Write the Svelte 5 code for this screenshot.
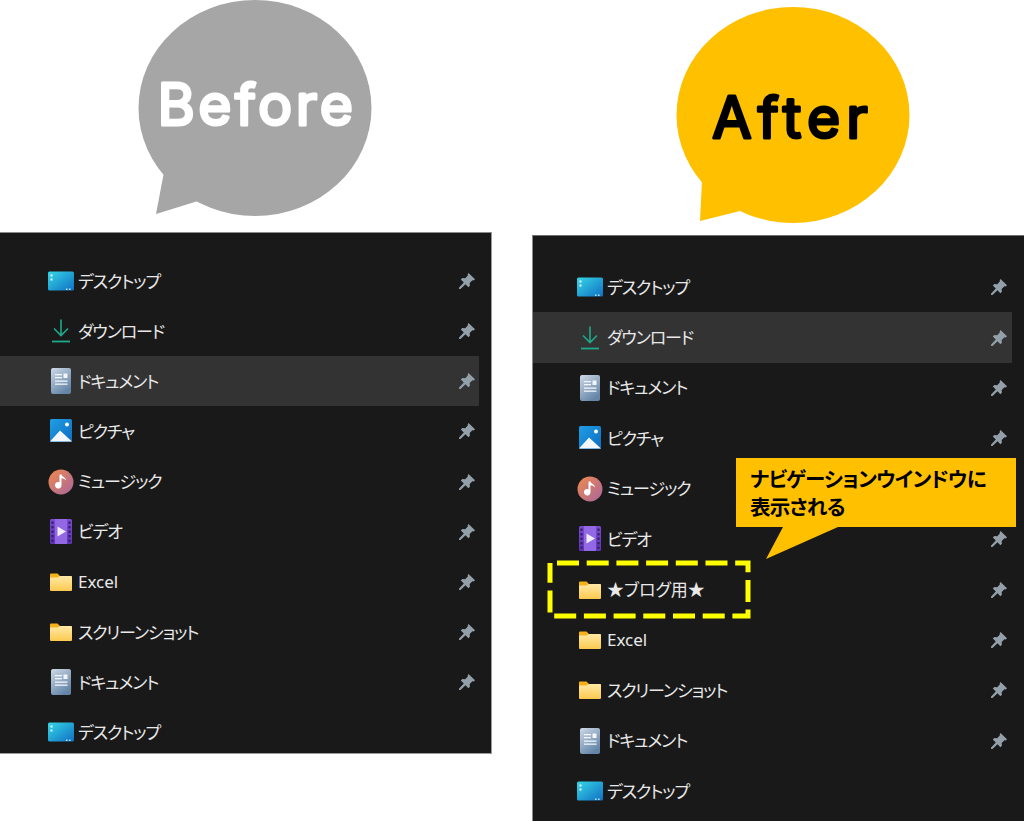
<script lang="ts">
	const before = [
		{ icon: 'desktop', label: 'デスクトップ', pin: true },
		{ icon: 'download', label: 'ダウンロード', pin: true },
		{ icon: 'doc', label: 'ドキュメント', pin: true, hover: true },
		{ icon: 'picture', label: 'ピクチャ', pin: true },
		{ icon: 'music', label: 'ミュージック', pin: true },
		{ icon: 'video', label: 'ビデオ', pin: true },
		{ icon: 'folder', label: 'Excel', pin: true, plain: true },
		{ icon: 'folder', label: 'スクリーンショット', pin: true },
		{ icon: 'doc', label: 'ドキュメント', pin: true },
		{ icon: 'desktop', label: 'デスクトップ', pin: false }
	];
	const after = [
		{ icon: 'desktop', label: 'デスクトップ', pin: true },
		{ icon: 'download', label: 'ダウンロード', pin: true, hover: true },
		{ icon: 'doc', label: 'ドキュメント', pin: true },
		{ icon: 'picture', label: 'ピクチャ', pin: true },
		{ icon: 'music', label: 'ミュージック', pin: true },
		{ icon: 'video', label: 'ビデオ', pin: true },
		{ icon: 'folder', label: '★ブログ用★', pin: true, plain: true },
		{ icon: 'folder', label: 'Excel', pin: true, plain: true },
		{ icon: 'folder', label: 'スクリーンショット', pin: true },
		{ icon: 'doc', label: 'ドキュメント', pin: true },
		{ icon: 'desktop', label: 'デスクトップ', pin: false }
	];
</script>

{#snippet icon(kind)}
	<svg class="icon" width="26" height="26" viewBox="0 0 26 26" aria-hidden="true">
		{#if kind === 'desktop'}
			<rect x="0" y="3.5" width="26" height="19" rx="1.5" fill="url(#g-desktop)" />
			<rect x="2.5" y="6.500" width="2" height="2" fill="#e6fbff" />
			<rect x="2.5" y="10.500" width="2" height="2" fill="#e6fbff" />
			<rect x="18" y="20.500" width="1.5" height="1.5" fill="#bfe6f5" />
			<rect x="21" y="20.500" width="1.5" height="1.5" fill="#bfe6f5" />
		{:else if kind === 'download'}
			<path d="M13 1.5V17M6 10.5l7 7 7-7" fill="none" stroke="#1fa88a" stroke-width="1.6" />
			<path d="M4 23.5h18" stroke="#1fa88a" stroke-width="1.8" />
		{:else if kind === 'doc'}
			<rect x="3" y="0" width="20" height="26" rx="2" fill="url(#g-doc)" />
			<rect x="7" y="6" width="7" height="1.3" fill="#f2f6fa" />
			<rect x="7" y="9" width="7" height="1.3" fill="#f2f6fa" />
			<rect x="15.5" y="5.5" width="4" height="4.5" fill="#f2f6fa" />
			<rect x="7" y="12.5" width="12.5" height="1.3" fill="#f2f6fa" />
			<rect x="7" y="15.5" width="12.5" height="1.3" fill="#f2f6fa" />
		{:else if kind === 'picture'}
			<rect x="2" y="1" width="22" height="23" rx="1.5" fill="url(#g-picture)" />
			<circle cx="19" cy="6.5" r="2" fill="#fff" />
			<path d="M2 23.5 12 12.5l12 11z" fill="#f4f8fb" />
		{:else if kind === 'music'}
			<circle cx="13" cy="13" r="12.5" fill="url(#g-music)" />
			<path d="M13.5 5.5v10.7a3.3 3.3 0 1 1-2-3V5.5zM13.5 5.5c.8 3 4.5 2.600 4.500 6-1-1.800-3-2-4.500-2.300z" fill="#fff" />
		{:else if kind === 'video'}
			<rect x="2" y="0" width="22" height="25" rx="1.5" fill="url(#g-video)" />
			<rect x="7" y="0" width="12" height="25" fill="#9268e4" />
			{#each [2.5, 7, 11.500, 16, 20.5] as y (y)}
				<rect x="3.400" y={y} width="2.200" height="2.400" fill="#34206a" />
				<rect x="20.400" y={y} width="2.200" height="2.400" fill="#34206a" />
			{/each}
			<path d="M9.500 7.500v10l8.500-5z" fill="#f1ecfb" />
		{:else}
			<path d="M2 5.500A1 1 0 0 1 3 4.500h6.500l3 3H24v5H2z" fill="#f6b21a" />
			<path d="M2 8.500h7.500l2.500-1.500h11a1 1 0 0 1 1 1v13a1 1 0 0 1-1 1H3a1 1 0 0 1-1-1z" fill="url(#g-folder)" />
		{/if}
	</svg>
{/snippet}

{#snippet pin()}
	<svg class="pin" width="18" height="18" viewBox="0 0 18 18" aria-hidden="true">
		<path d="M10.500 1 17 7.200l-1.300 1.200-1.300-.2-2.700 2.700.2 2.900-1.500 1.500-2.900-3L2.500 17 1 16.900l.1-1.400 4.700-5-3-3 1.500-1.500 2.900.2 2.600-2.700-.1-1.300z" fill="#93a0aa" />
	</svg>
{/snippet}

{#snippet list(rows)}
	<ul>
		{#each rows as row, i (i)}
			<li class:hover={row.hover}>
				{@render icon(row.icon)}
				<span class="label" class:plain={row.plain}>{row.label}</span>
				{#if row.pin}{@render pin()}{/if}
			</li>
		{/each}
	</ul>
{/snippet}

<svg class="defs" width="0" height="0" aria-hidden="true">
	<defs>
		<linearGradient id="g-desktop" x1="0" y1="0" x2="1" y2="1">
			<stop offset="0" stop-color="#35d6e6" />
			<stop offset="1" stop-color="#1070c4" />
		</linearGradient>
		<linearGradient id="g-doc" x1="0" y1="0" x2="0.6" y2="1">
			<stop offset="0" stop-color="#cfdae6" />
			<stop offset="1" stop-color="#6485a8" />
		</linearGradient>
		<linearGradient id="g-picture" x1="0" y1="0" x2="1" y2="1">
			<stop offset="0" stop-color="#1f9fe6" />
			<stop offset="1" stop-color="#0f6cc0" />
		</linearGradient>
		<linearGradient id="g-music" x1="0" y1="0" x2="1" y2="1">
			<stop offset="0" stop-color="#f08a4b" />
			<stop offset="1" stop-color="#a8659f" />
		</linearGradient>
		<linearGradient id="g-video" x1="0" y1="0" x2="0" y2="1">
			<stop offset="0" stop-color="#7a4bd0" />
			<stop offset="1" stop-color="#5f34b4" />
		</linearGradient>
		<linearGradient id="g-folder" x1="0" y1="0" x2="0" y2="1">
			<stop offset="0" stop-color="#ffe9a6" />
			<stop offset="1" stop-color="#fcc94f" />
		</linearGradient>
	</defs>
</svg>

<main>
	<section class="before">
		<svg class="bubble" width="492" height="232" viewBox="0 0 492 232">
			<ellipse cx="255" cy="108" rx="116.500" ry="108" fill="#a6a6a6" />
			<path d="M164 172 156 214 198 201z" fill="#a6a6a6" />
			<text x="257" y="125" text-anchor="middle" class="word" fill="#fff" stroke="#fff">Before</text>
		</svg>
		<div class="panel">
			{@render list(before)}
		</div>
	</section>

	<section class="after">
		<svg class="bubble" width="492" height="235" viewBox="0 0 492 235">
			<ellipse cx="261" cy="115" rx="116.500" ry="108" fill="#ffc000" />
			<path d="M170 180 168 221 208 211z" fill="#ffc000" />
			<text x="261" y="138" text-anchor="middle" class="word wide" fill="#000" stroke="#000">After</text>
		</svg>
		<div class="panel">
			{@render list(after)}
			<div class="callout">ナビゲーションウインドウに<br />表示される</div>
			<svg class="marker" width="210" height="64" viewBox="0 0 210 64" aria-hidden="true">
				<rect x="5" y="5" width="198" height="53" fill="none" stroke="#ffff00" stroke-width="5" stroke-dasharray="22 7.7" stroke-dashoffset="22.700" />
			</svg>
		</div>
	</section>
</main>

<style>
	:global(body) {
		background: #fff;
	}
	.defs {
		position: absolute;
	}
	main {
		width: 1024px;
		height: 821px;
		overflow: hidden;
		display: grid;
		grid-template-columns: 492px 492px;
		column-gap: 40px;
		font-family: 'Noto Sans', 'Noto Sans CJK JP', sans-serif;
	}
	.bubble {
		display: block;
	}
	.word {
		font-family: Inter, 'Noto Sans', sans-serif;
		font-size: 57px;
		font-weight: 400;
		letter-spacing: 3.5px;
		stroke-width: 3px;
		stroke-linejoin: round;
	}
	.word.wide {
		letter-spacing: 6px;
	}
	.panel {
		position: relative;
		background: #191919;
		box-sizing: border-box;
	}
	.before .panel {
		height: 522px;
		padding-top: 23px;
		border-top: 1px solid #8a8a8a;
		border-right: 1px solid #9a9a9a;
		border-bottom: 1px solid #9a9a9a;
	}
	.after .panel {
		height: 586px;
		padding-top: 26px;
		border-top: 1px solid #6f6f6f;
		border-left: 1px solid #8a8a8a;
	}
	ul {
		margin: 0 12px 0 0;
		padding: 0;
		list-style: none;
	}
	li {
		display: flex;
		align-items: center;
		gap: 4px;
		height: 50.15px;
		padding-left: 48px;
		padding-right: 4px;
		color: #e9e9e9;
		font-size: 17px;
		font-feature-settings: 'palt';
	}
	.before li {
		padding-right: 3px;
	}
	.after li {
		height: 50.4px;
		padding-left: 44px;
	}
	li.hover {
		background: #333;
	}
	.icon {
		flex: none;
	}
	.label {
		flex: 1;
		line-height: 1;
		letter-spacing: -1.1px;
	}
	.label.plain {
		letter-spacing: 0;
	}
	.pin {
		flex: none;
	}
	.callout {
		position: absolute;
		left: 203px;
		top: 222px;
		width: 280px;
		height: 69px;
		box-sizing: border-box;
		padding: 7px 0 0 14px;
		background: #ffc000;
		color: #000;
		font-size: 20.5px;
		font-weight: 700;
		letter-spacing: -0.7px;
		line-height: 28px;
		font-feature-settings: 'palt';
	}
	.callout::after {
		content: '';
		position: absolute;
		left: 30px;
		top: 69px;
		width: 72px;
		height: 32px;
		background: #ffc000;
		clip-path: polygon(17px 0, 72px 0, 0 32px);
	}
	.marker {
		position: absolute;
		left: 12px;
		top: 322px;
	}
</style>
